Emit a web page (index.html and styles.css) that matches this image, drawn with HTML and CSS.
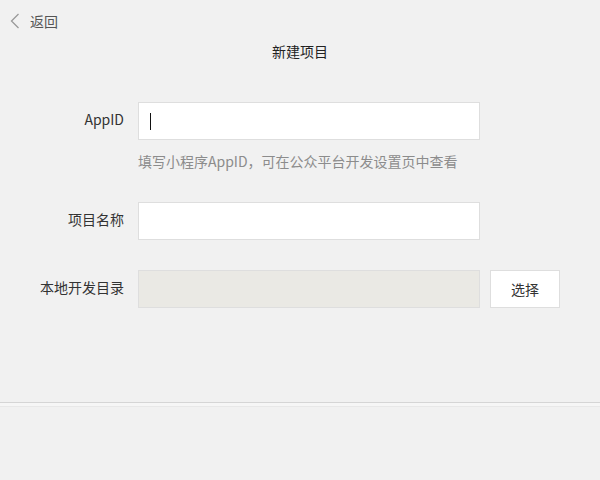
FILE: index.html
```html
<!DOCTYPE html>
<html lang="zh-CN">
<head>
<meta charset="utf-8">
<title>新建项目</title>
<link rel="stylesheet" href="styles.css">
</head>
<body>
<div class="page">
  <div class="topbar">
    <a class="back">
      <svg class="chev" width="10" height="16" viewBox="0 0 10 16"><path d="M8.5 1 L1.5 8 L8.5 15" fill="none" stroke="#9a9a9a" stroke-width="1.3"/></svg>
      <span>返回</span>
    </a>
  </div>
  <div class="title">新建项目</div>
  <div class="form">
    <div class="row">
      <label class="label">AppID</label>
      <div class="field"><div class="input"><span class="caret"></span></div></div>
    </div>
    <div class="hint">填写小程序AppID，可在公众平台开发设置页中查看</div>
    <div class="row row-name">
      <label class="label">项目名称</label>
      <div class="field"><div class="input"></div></div>
    </div>
    <div class="row row-dir">
      <label class="label">本地开发目录</label>
      <div class="field"><div class="input disabled"></div></div>
      <button class="btn">选择</button>
    </div>
  </div>
  <div class="footer"></div>
</div>
</body>
</html>
```

FILE: styles.css
```css
html, body {
  margin: 0;
  padding: 0;
  background: #f1f1f1;
}
body {
  font-family: "Noto Sans CJK SC", "Microsoft YaHei", sans-serif;
  color: #333;
  font-size: 14px;
}
.page {
  width: 600px;
  height: 480px;
  display: flex;
  flex-direction: column;
}
.topbar {
  height: 42px;
  padding-left: 10px;
  display: flex;
  align-items: center;
}
.back {
  display: flex;
  align-items: center;
  gap: 10px;
  color: #555;
  font-size: 14px;
  height: 22px;
  margin-top: -1px;
}
.chev { display: block; }
.title {
  text-align: center;
  font-size: 14px;
  color: #222;
  line-height: 18px;
}
.form {
  margin-top: 42px;
  display: flex;
  flex-direction: column;
}
.row {
  display: flex;
  align-items: center;
}
.label {
  text-align: right;
  padding-right: 14px;
  box-sizing: border-box;
  width: 138px;
  font-size: 14px;
  color: #333;
  margin-top: -5px;
}
.field { width: 342px; }
.input {
  height: 38px;
  box-sizing: border-box;
  background: #fff;
  border: 1px solid #dedede;
  position: relative;
}
.input.disabled {
  background: #eae9e4;
}
.caret {
  position: absolute;
  left: 11px;
  top: 10px;
  width: 1px;
  height: 17px;
  background: #111;
}
.hint {
  margin-left: 138px;
  margin-top: 11px;
  font-size: 14px;
  color: #8c8c8c;
  line-height: 20px;
}
.row-name { margin-top: 31px; }
.row-dir { margin-top: 30px; }
.btn {
  margin-left: 10px;
  width: 70px;
  height: 38px;
  background: #fff;
  border: 1px solid #dedede;
  font-family: inherit;
  font-size: 14px;
  color: #333;
  padding: 0;
}
.footer {
  margin-top: auto;
  height: 77px;
  border-top: 1px solid #d5d5d5;
  box-shadow: inset 0 3px 0 #f6f6f6, inset 0 4px 0 #e8e8e8;
  background: #f1f1f1;
}
```
